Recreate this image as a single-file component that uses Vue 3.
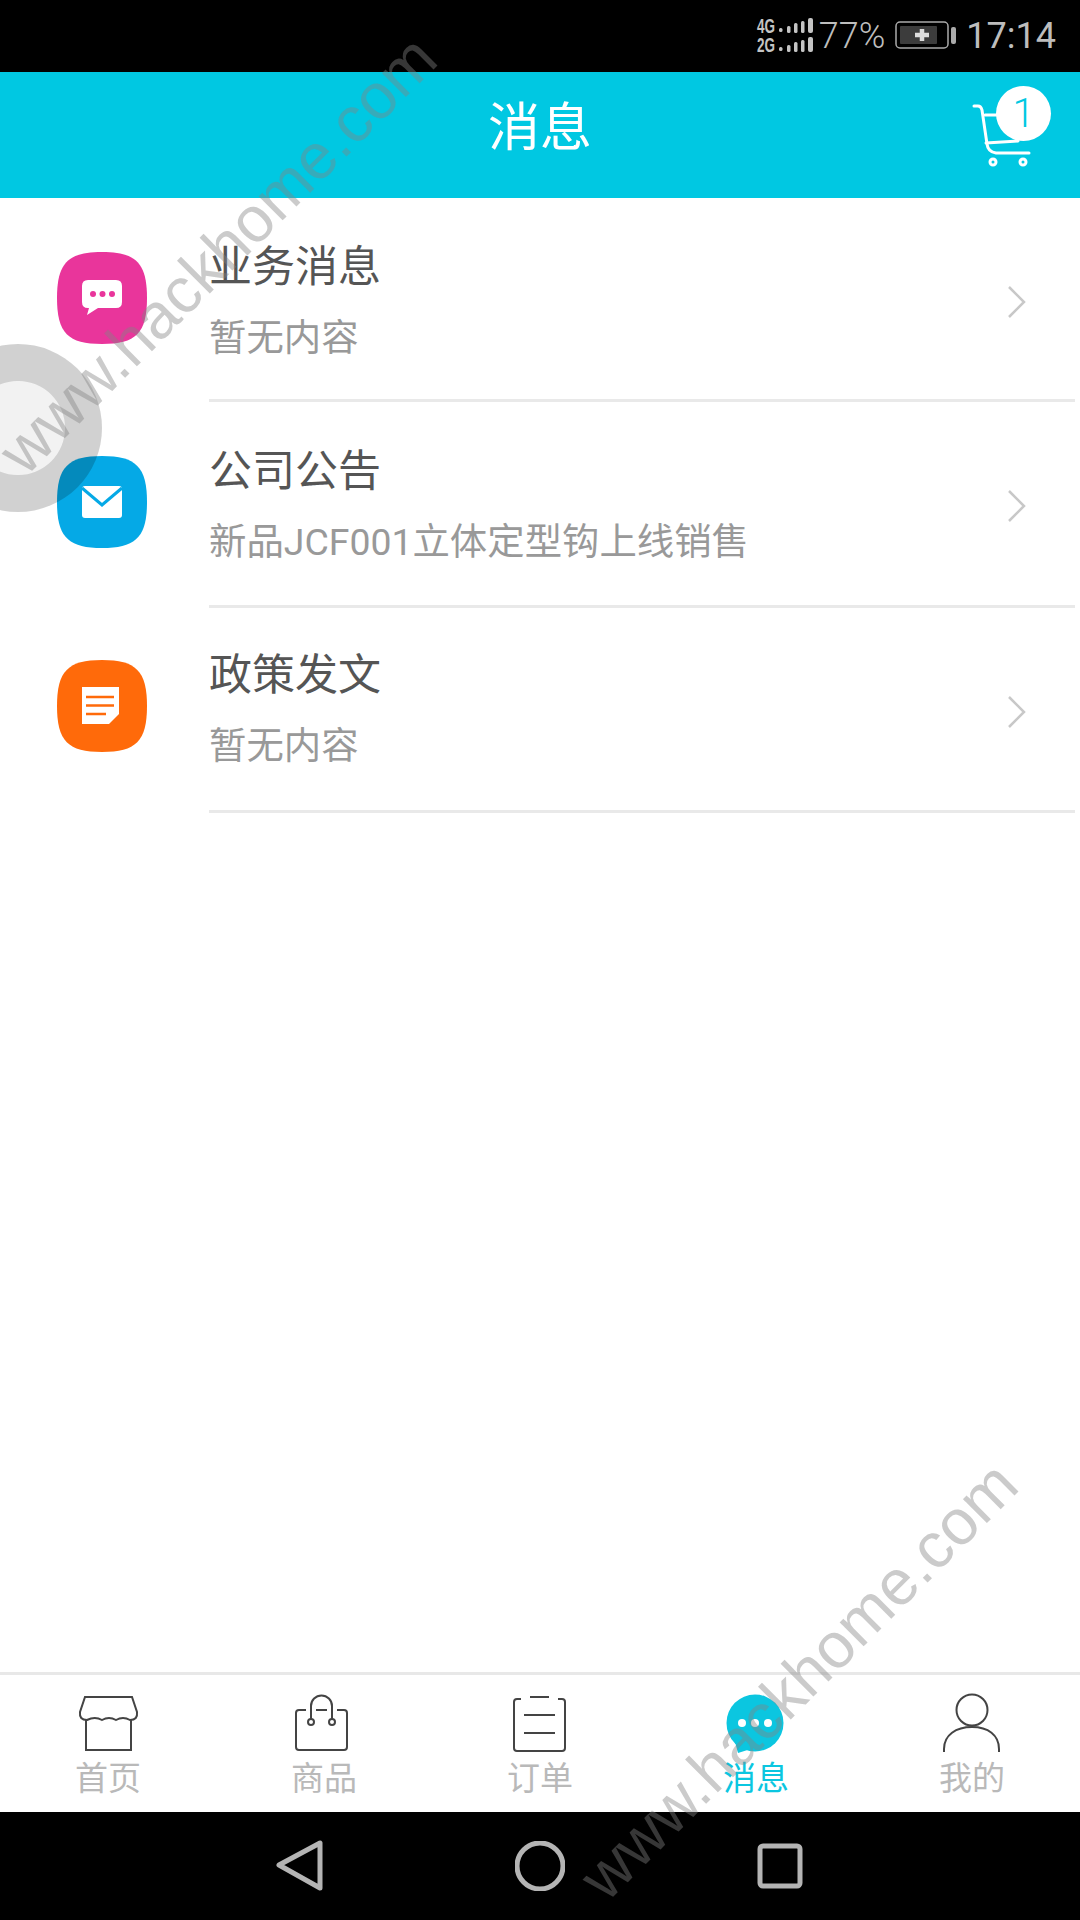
<template>
  <div class="page">
    <!-- 状态栏 -->
    <div class="status">
      <svg class="signal" width="60" height="40" viewBox="0 0 60 40">
        <text x="1" y="15" class="net" textLength="18" lengthAdjust="spacingAndGlyphs">4G</text>
        <text x="1" y="34" class="net" textLength="18" lengthAdjust="spacingAndGlyphs">2G</text>
        <g v-for="y in [0, 19]" :key="y" fill="#c4c4c4">
          <rect x="23" :y="y + 10" width="3.5" height="4" rx="1.5" />
          <rect x="31" :y="y + 8" width="3.5" height="7" rx="1.5" />
          <rect x="38" :y="y + 5" width="3.5" height="10" rx="1.5" />
          <rect x="45" :y="y + 3" width="3.5" height="12" rx="1.5" />
          <rect x="52" :y="y" width="5" height="15" rx="2" />
        </g>
      </svg>
      <span class="pct">77%</span>
      <svg class="battery" width="62" height="30" viewBox="0 0 62 30">
        <rect x="1" y="1" width="52" height="26" rx="4" fill="none" stroke="#aaa" stroke-width="1.5" />
        <rect x="5" y="5" width="37" height="18" rx="1" fill="#3c3c3c" />
        <path d="M20 14h14M27 8v12" stroke="#ddd" stroke-width="4.5" fill="none" />
        <rect x="56" y="6" width="5" height="17" rx="2" fill="#aaa" />
      </svg>
      <span class="time">17:14</span>
    </div>

    <!-- 标题栏 -->
    <div class="header">
      <span class="title">消息</span>
      <div class="cart">
        <svg width="70" height="70" viewBox="0 0 70 70" fill="none" stroke="#fff" stroke-width="3" stroke-linecap="round">
          <path d="M6 4H10Q13 4 14 8L19 42Q20 50 28 51H61" />
          <path d="M18 41L50 39M17 13H30" />
          <circle cx="25" cy="60" r="3" />
          <circle cx="55" cy="60" r="3" />
        </svg>
        <span class="badge">1</span>
      </div>
    </div>

    <!-- 消息列表 -->
    <div class="list">
      <div class="row" v-for="item in rows" :key="item.title">
        <div class="icon">
          <svg width="90" height="92" viewBox="0 0 90 92">
            <path d="M45 0C79 0 90 11 90 46S79 92 45 92 0 81 0 46 11 0 45 0Z" :fill="item.color" />
            <g v-if="item.kind === 'chat'">
              <path d="M31 28H59Q65 28 65 34V50Q65 56 59 56H41L30 63 32 56H31Q25 56 25 50V34Q25 28 31 28Z" fill="#fff" />
              <circle cx="36" cy="42" r="3" :fill="item.color" />
              <circle cx="45.500" cy="42" r="3" :fill="item.color" />
              <circle cx="55" cy="42" r="3" :fill="item.color" />
            </g>
            <g v-else-if="item.kind === 'mail'">
              <rect x="25" y="30" width="40" height="32" rx="3" fill="#fff" />
              <path d="M25 32L45 49 65 32" fill="none" :stroke="item.color" stroke-width="3" />
            </g>
            <g v-else>
              <path d="M25 27H62V54L52 64H25Z" fill="#fff" />
              <path d="M29 37H57M29 45.500H57M29 54H49" :stroke="item.color" stroke-width="2.500" fill="none" />
            </g>
          </svg>
        </div>
        <div class="body">
          <div class="name">{{ item.title }}</div>
          <div class="desc">{{ item.desc }}</div>
          <svg class="arrow" width="22" height="36" viewBox="0 0 22 36" fill="none" stroke="#c8c8c8" stroke-width="2.500">
            <path d="M3 3L18 18 3 33" />
          </svg>
        </div>
      </div>
    </div>

    <!-- 底部导航 -->
    <div class="tabs">
      <div class="tab">
        <svg width="64" height="60" viewBox="0 0 64 60" fill="none" stroke="#444" stroke-width="2">
          <path d="M9 4H56L61 19Q62 27 54 27Q47 23 40 27Q33 23 26 27Q19 23 11 27Q3 27 4 19Z" />
          <path d="M10 27V57H55V27" />
        </svg>
        <span>首页</span>
      </div>
      <div class="tab">
        <svg width="64" height="60" viewBox="0 0 64 60" fill="none" stroke="#444" stroke-width="2">
          <path d="M14 17H7Q4 17 4 20V54Q4 57 7 57H52Q55 57 55 54V20Q55 17 52 17H45M24 17H35" />
          <path d="M19 26V13A10.500 10.500 0 0 1 40 13V26" />
          <circle cx="19" cy="29" r="3" />
          <circle cx="40" cy="29" r="3" />
        </svg>
        <span>商品</span>
      </div>
      <div class="tab">
        <svg width="64" height="60" viewBox="0 0 64 60" fill="none" stroke="#444" stroke-width="2">
          <path d="M13 6H9Q6 6 6 9V55Q6 58 9 58H54Q57 58 57 55V9Q57 6 54 6H50M22 4H41" />
          <path d="M16 22H47M16 40H47" />
        </svg>
        <span>订单</span>
      </div>
      <div class="tab active">
        <svg width="64" height="60" viewBox="0 0 64 60">
          <circle cx="31" cy="30" r="28.500" fill="#0bc6e0" />
          <path d="M10 45L14 60 30 55Z" fill="#0bc6e0" />
          <circle cx="18" cy="30" r="4" fill="#fff" />
          <circle cx="31" cy="30" r="4" fill="#fff" />
          <circle cx="44" cy="30" r="4" fill="#fff" />
        </svg>
        <span>消息</span>
      </div>
      <div class="tab">
        <svg width="64" height="60" viewBox="0 0 64 60" fill="none" stroke="#444" stroke-width="2">
          <circle cx="32" cy="17" r="15.500" />
          <path d="M4 59V56C4 42 16 34 32 34S59 42 59 56V59" />
        </svg>
        <span>我的</span>
      </div>
    </div>

    <!-- 系统导航键 -->
    <div class="nav">
      <svg class="back" width="66" height="54" viewBox="0 0 66 54" fill="none" stroke="#b4b4b4" stroke-width="5" stroke-linejoin="round">
        <path d="M47 4V49L6 26Z" />
      </svg>
      <svg class="home" width="50" height="50" viewBox="0 0 50 50" fill="none" stroke="#b4b4b4" stroke-width="5">
        <circle cx="25" cy="25" r="23" />
      </svg>
      <svg class="recent" width="46" height="46" viewBox="0 0 46 46" fill="none" stroke="#b4b4b4" stroke-width="5">
        <rect x="3" y="3" width="40" height="40" rx="3" />
      </svg>
    </div>

    <!-- 悬浮球和水印 -->
    <div class="float-ball"></div>
    <div class="mark mark-top">www.hackhome.com</div>
    <div class="mark mark-bottom">www.hackhome.com</div>
  </div>
</template>

<script setup>
const rows = [
  { title: '业务消息', desc: '暂无内容', kind: 'chat', color: '#e9359b' },
  { title: '公司公告', desc: '新品JCF001立体定型钩上线销售', kind: 'mail', color: '#05a9e6' },
  { title: '政策发文', desc: '暂无内容', kind: 'note', color: '#ff6a0a' }
];
</script>

<style>
body {
  margin: 0;
  background: #fff;
}
</style>

<style scoped>
.page {
  position: relative;
  width: 1080px;
  height: 1920px;
  overflow: hidden;
  display: flex;
  flex-direction: column;
  background: #fff;
  font-family: Roboto, "Noto Sans CJK SC", sans-serif;
}

.status {
  height: 72px;
  background: #000;
  display: flex;
  align-items: center;
  justify-content: flex-end;
  padding-right: 24px;
  color: #bdbdbd;
}
.signal {
  margin: 4px 3px 0 0;
}
.net {
  font-family: "Liberation Sans", sans-serif;
  font-size: 21px;
  font-weight: 700;
  fill: #c4c4c4;
}
.pct {
  font-size: 36px;
  font-weight: 300;
}
.battery {
  margin: 0 6px 0 10px;
}
.time {
  font-size: 36px;
  margin-left: 3px;
}

.header {
  position: relative;
  height: 126px;
  background: #00c8e2;
  display: flex;
  align-items: center;
  justify-content: center;
  padding-bottom: 24px;
  box-sizing: border-box;
}
.title {
  color: #fff;
  font-size: 52px;
}
.cart {
  position: absolute;
  right: 42px;
  top: 30px;
  width: 70px;
  height: 70px;
}
.cart svg {
  display: block;
}
.badge {
  position: absolute;
  left: 28px;
  top: -16px;
  width: 55px;
  height: 55px;
  border-radius: 50%;
  background: #fff;
  color: #00c8e2;
  font-size: 40px;
  font-weight: 300;
  display: flex;
  align-items: center;
  justify-content: center;
}

.list {
  flex: 1;
}
.row {
  display: flex;
  height: 205px;
}
.row:nth-child(1) {
  height: 204px;
}
.row:nth-child(2) {
  height: 206px;
}
.icon {
  width: 209px;
  flex: none;
  padding: 54px 0 0 57px;
  box-sizing: border-box;
}
.row:nth-child(3) .icon {
  padding-top: 52px;
}
.icon svg {
  display: block;
}
.body {
  position: relative;
  flex: 1;
  margin-right: 5px;
  border-bottom: 3px solid #e9e9e9;
  padding-top: 38px;
}
.row:nth-child(3) .body {
  padding-top: 36px;
}
.name {
  font-size: 43px;
  line-height: 62px;
  color: #555;
}
.desc {
  margin-top: 14px;
  font-size: 37.400px;
  line-height: 52px;
  color: #999;
}
.arrow {
  position: absolute;
  right: 47px;
  top: 86px;
}

.tabs {
  height: 140px;
  box-sizing: border-box;
  border-top: 3px solid #e8e8e8;
  display: flex;
  background: #fff;
}
.tab {
  flex: 1;
  display: flex;
  flex-direction: column;
  align-items: center;
  padding-top: 18px;
  color: #b9b9b9;
  font-size: 33px;
}
.tab svg {
  display: block;
}
.tab span {
  line-height: 44px;
  margin-top: 4px;
}
.tab.active {
  color: #0bc6e0;
}

.nav {
  height: 108px;
  background: #000;
  display: flex;
  align-items: center;
  padding-left: 273px;
}
.home {
  margin-left: 176px;
}
.recent {
  margin-left: 192px;
}

.float-ball {
  position: absolute;
  left: -66px;
  top: 344px;
  width: 168px;
  height: 168px;
  box-sizing: border-box;
  border-radius: 50%;
  border: 37px solid rgba(0, 0, 0, 0.18);
  background: rgba(0, 0, 0, 0.05);
  background-clip: padding-box;
}

.mark {
  position: absolute;
  font-family: "Liberation Sans", sans-serif;
  font-size: 64px;
  line-height: 70px;
  white-space: nowrap;
  color: rgba(130, 130, 130, 0.42);
  transform: rotate(-45deg);
  transform-origin: left center;
}
.mark-top {
  left: 10px;
  top: 427px;
}
.mark-bottom {
  left: 591px;
  top: 1853px;
}
</style>
